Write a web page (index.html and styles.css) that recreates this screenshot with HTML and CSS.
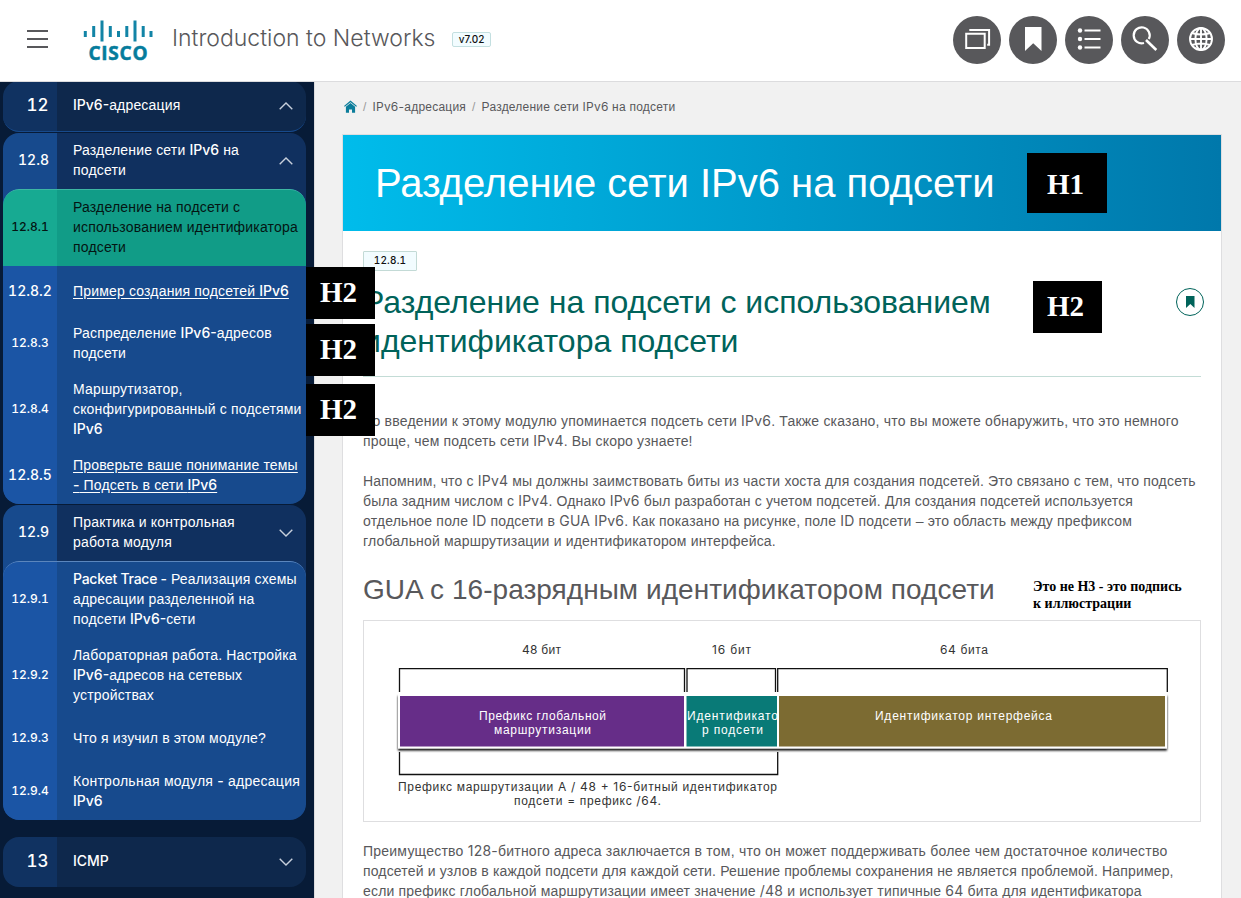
FILE: index.html
```html
<!DOCTYPE html>
<html lang="ru">
<head>
<meta charset="utf-8">
<title>Introduction to Networks</title>
<link rel="stylesheet" href="styles.css">
</head>
<body>
<header class="topbar">
  <svg class="burger" width="22" height="20" viewBox="0 0 22 20"><path d="M0 2h21M0 10h21M0 18h21" stroke="#58585b" stroke-width="2"/></svg>
  <svg class="logo" width="70" height="50" viewBox="0 0 70 50">
    <g stroke="#1284a6" stroke-width="3">
      <path d="M2.300 13v6M10.700 8v11M19 2.500v21M27.300 8v11M35.500 13v6M43.800 8v11M52 2.500v21M60.200 8v11M68 13v6"/>
    </g>
    <text x="5.500" y="41.500" textLength="59" lengthAdjust="spacing" class="logo-text">CISCO</text>
  </svg>
  <div class="course">Introduction to Networks</div>
  <span class="version">v7.02</span>
  <nav class="tools">
    <span class="tool"><svg viewBox="0 0 48 48"><path d="M13.200 17.800h18.500v14.300H13.200z" fill="none" stroke="#fff" stroke-width="2"/><path d="M16.300 14h19.800v14.700h-1.900" fill="none" stroke="#fff" stroke-width="2"/></svg></span>
    <span class="tool"><svg viewBox="0 0 48 48"><path d="M16 11h16.500v24L24.200 27.300 16 35z" fill="#fff"/></svg></span>
    <span class="tool"><svg viewBox="0 0 48 48"><path d="M19.500 14.500h16M19.500 23h16M19.500 31.500h16" stroke="#fff" stroke-width="2"/><g fill="#fff"><circle cx="15" cy="14.500" r="2.200"/><circle cx="15" cy="23" r="2.200"/><circle cx="15" cy="31.500" r="2.200"/></g></svg></span>
    <span class="tool"><svg viewBox="0 0 48 48"><path d="M23 27A8 8 0 1 1 27.800 23" fill="none" stroke="#fff" stroke-width="2.200"/><path d="M25 24l10.300 10" stroke="#fff" stroke-width="2.600"/></svg></span>
    <span class="tool"><svg viewBox="0 0 48 48"><g fill="none" stroke="#fff" stroke-width="1.900"><circle cx="24" cy="23" r="11"/><ellipse cx="24" cy="23" rx="5.600" ry="11"/><path d="M24 12v22M13 23h22M15 17q9 3 18 0M15 29q9-3 18 0"/></g></svg></span>
  </nav>
</header>
<div class="page">
  <aside class="side">
    <div class="row module first"><b class="n big">12</b><span class="t"><i>IPv6-</i>адресация</span><svg class="chev" viewBox="0 0 14 8"><path d="M.7 7.300 7 1l6.300 6.300"/></svg></div>
    <div class="group">
      <div class="row topic"><b class="n mid">12.8</b><span class="t">Разделение сети <i>IPv6</i> на<br>подсети</span><svg class="chev" viewBox="0 0 14 8"><path d="M.7 7.300 7 1l6.300 6.300"/></svg></div>
      <div class="list">
        <div class="row three active"><b class="n">12.8.1</b><span class="t">Разделение на подсети с<br>использованием идентификатора<br>подсети</span></div>
        <div class="row one short"><b class="n wide">12.8.2</b><span class="t u">Пример создания подсетей <i>IPv6</i></span></div>
        <div class="row two"><b class="n">12.8.3</b><span class="t">Распределение <i>IPv6-</i>адресов<br>подсети</span></div>
        <div class="row three"><b class="n">12.8.4</b><span class="t">Маршрутизатор,<br>сконфигурированный с подсетями<br><i>IPv6</i></span></div>
        <div class="row last"><b class="n wide">12.8.5</b><span class="t u">Проверьте ваше понимание темы<br><i>-</i> Подсеть в сети <i>IPv6</i></span></div>
      </div>
    </div>
    <div class="group">
      <div class="row topic"><b class="n mid">12.9</b><span class="t">Практика и контрольная<br>работа модуля</span><svg class="chev" viewBox="0 0 14 8"><path d="M.7.700 7 7 13.300.700"/></svg></div>
      <div class="list">
        <div class="row three lined"><b class="n">12.9.1</b><span class="t"><i class="tight">Packet Trace -</i> Реализация схемы<br>адресации разделенной на<br>подсети <i>IPv6-</i>сети</span></div>
        <div class="row three"><b class="n">12.9.2</b><span class="t">Лабораторная работа. Настройка<br><i>IPv6-</i>адресов на сетевых<br>устройствах</span></div>
        <div class="row one"><b class="n">12.9.3</b><span class="t">Что я изучил в этом модуле?</span></div>
        <div class="row last"><b class="n">12.9.4</b><span class="t loose">Контрольная модуля <i>-</i> адресация<br><i>IPv6</i></span></div>
      </div>
    </div>
    <div class="row module next"><b class="n big">13</b><span class="t"><i>ICMP</i></span><svg class="chev" viewBox="0 0 14 8"><path d="M.7.700 7 7 13.300.700"/></svg></div>
  </aside>
  <main class="main">
    <div class="crumbs">
      <svg width="13" height="13" viewBox="0 0 13 13"><path d="M0 6 6.500.600 13 6l-.8.800L6.500 2.200.8 6.800z" fill="#0b7d9b"/><path d="M1.900 6.700 6.500 3l4.600 3.700v6H8V9.500H5v3.200H1.900z" fill="#0b7d9b"/></svg>
      <em>/</em><span><i>IPv6-</i>адресация</span><em>/</em><span>Разделение сети <i>IPv6</i> на подсети</span>
    </div>
    <article class="card">
      <h1 class="banner">Разделение сети IPv6 на подсети</h1>
      <div class="body">
        <span class="tag">12.8.1</span>
        <div class="heading">
          <h2 class="title">Разделение на подсети с использованием<br>идентификатора подсети</h2>
          <span class="mark"><svg width="9" height="12" viewBox="0 0 9 12"><path d="M0 0h8.500v12l-4.200-3.900L0 12z" fill="#00635a"/></svg></span>
        </div>
        <p class="p1"><span class="ls-d">Во введении к этому модулю упоминается подсеть сети <i>IPv6</i>. Также сказано, что вы можете обнаружить, что это немного</span><br><span class="ls-b">проще, чем подсеть сети <i>IPv4</i>. Вы скоро узнаете!</span></p>
        <p><span class="ls-c">Напомним, что с <i>IPv4</i> мы должны заимствовать биты из части хоста для создания подсетей. Это связано с тем, что подсеть</span><br><span class="ls-a">была задним числом с <i>IPv4</i>. Однако <i>IPv6</i> был разработан с учетом подсетей. Для создания подсетей используется</span><br><span class="ls-c">отдельное поле <i>ID</i> подсети в <i>GUA IPv6</i>. Как показано на рисунке, поле <i>ID</i> подсети – это область между префиксом</span><br><span class="ls-c">глобальной маршрутизации и идентификатором интерфейса.</span></p>
        <div class="caption">GUA с 16-разрядным идентификатором подсети</div>
        <div class="figure">
          <svg width="836" height="200" viewBox="364 621 836 200">
            <defs><filter id="sh" x="-5%" y="-20%" width="110%" height="150%"><feDropShadow dx="0" dy="2" stdDeviation="1.200" flood-color="#000" flood-opacity="1"/></filter></defs>
            <g fill="none" stroke="#111" stroke-width="1.300">
              <path d="M399.500 692v-23.300h285V692M687 692v-23.300h88.500V692M777.700 692v-23.300h389.600V692"/>
              <path d="M399.500 752v22.500h378.200V752"/>
            </g>
            <rect x="398" y="694" width="769" height="54.500" fill="#fff" filter="url(#sh)"/>
            <rect x="400" y="696" width="284" height="50.500" fill="#662d88"/>
            <rect x="686.500" y="696" width="90.500" height="50.500" fill="#097a77"/>
            <rect x="779" y="696" width="386" height="50.500" fill="#7c6b32"/>
            <g class="dk">
              <text x="522" y="654" textLength="39"><tspan class="lt">48</tspan> бит</text>
              <text x="712" y="654" textLength="39"><tspan class="lt">16</tspan> бит</text>
              <text x="940" y="654" textLength="48"><tspan class="lt">64</tspan> бита</text>
              <text x="398" y="791" textLength="379">Префикс маршрутизации <tspan class="lt">A / 48 + 16-</tspan>битный идентификатор</text>
              <text x="514" y="805" textLength="147">подсети <tspan class="lt">=</tspan> префикс <tspan class="lt">/64.</tspan></text>
            </g>
            <g class="wt">
              <text x="479" y="720" textLength="127">Префикс глобальной</text>
              <text x="494" y="734" textLength="97">маршрутизации</text>
              <text x="687" y="720" textLength="91">Идентификато</text>
              <text x="702" y="734" textLength="61">р подсети</text>
              <text x="875" y="720" textLength="177">Идентификатор интерфейса</text>
            </g>
          </svg>
        </div>
        <p><span class="ls-e">Преимущество <i>128-</i>битного адреса заключается в том, что он может поддерживать более чем достаточное количество</span><br><span class="ls-a">подсетей и узлов в каждой подсети для каждой сети. Решение проблемы сохранения не является проблемой. Например,</span><br><span class="ls-c">если префикс глобальной маршрутизации имеет значение <i>/48</i> и использует типичные <i>64</i> бита для идентификатора</span></p>
      </div>
    </article>
  </main>
</div>
<div class="note h1n">H1</div>
<div class="note h2n">H2</div>
<div class="note s1">H2</div>
<div class="note s2">H2</div>
<div class="note s3">H2</div>
<div class="remark">Это не H3 - это подпись<br>к иллюстрации</div>
</body>
</html>
```
FILE: styles.css
```css
* { box-sizing: border-box; }
body { margin: 0; width: 1241px; height: 898px; overflow: hidden; position: relative; background: #f1f1f1; font-family: "Liberation Sans", Arial, sans-serif; color: #58585b; }
i { font-style: normal; font-family: Inter, sans-serif; }
.topbar { height: 82px; background: #fff; border-bottom: 1px solid #dcdcde; display: flex; align-items: flex-start; padding-left: 27px; }
.burger { margin-top: 29px; }
.logo { margin: 18px 0 0 34px; overflow: visible; }
.logo-text { font: 700 19px "Open Sans", sans-serif; fill: #057c9c; stroke: #057c9c; stroke-width: .5px; }
.course { width: 263px; margin: 20px 0 0 19px; font: 300 23px/37px Inter, sans-serif; white-space: nowrap; }
.version { margin: 32px 0 0 17px; width: 39px; height: 15px; border: 1px solid #c3dfe0; border-radius: 2px; background: #f2fcff; color: #111; font: 500 10px/13px Inter, sans-serif; text-align: center; }
.tools { display: flex; gap: 8px; margin: 16px 16px 0 auto; }
.tool { width: 48px; height: 48px; border-radius: 50%; background: #58585b; }
.tool svg { display: block; }
.page { display: flex; height: 816px; }

.side { width: 314px; height: 816px; background: #071b37; padding: 0 8px 0 3px; overflow: hidden; }
.row { display: flex; align-items: center; color: #fff; font-size: 14px; line-height: 20px; }
.n { width: 54px; flex: none; text-align: center; font: 500 12px/20px Inter, sans-serif; font-variant-numeric: tabular-nums; }
.n.big { font-size: 17px; padding-left: 15px; }
.n.mid { font-size: 14px; padding-left: 7px; }
.n.wide { font-size: 14px; }
.t { flex: 1; padding-left: 16px; white-space: nowrap; letter-spacing: .17px; }
.t.loose { letter-spacing: .26px; }
.side i { font-weight: 500; letter-spacing: 0; }
.side i.tight { letter-spacing: -.25px; }
.u { text-decoration: underline; text-underline-offset: 2px; }
.chev { width: 14px; height: 8px; margin: 2px 13px 0 0; fill: none; stroke: #c8d0dc; stroke-width: 1.400; overflow: visible; }
.module { height: 50px; border-radius: 16px; background: linear-gradient(90deg, #103261 54px, #0e284c 54px); }
.module.first { margin-top: -1px; padding-bottom: 2px; border-bottom: 1px solid #174a8d; height: 51px; }
.module.next { margin-top: 17px; padding-bottom: 2px; }
.group { margin-top: 1px; border-radius: 16px; overflow: hidden; background: linear-gradient(90deg, #174a8d 54px, #10305f 54px); }
.topic { height: 56px; padding-bottom: 2px; }
.list { border-radius: 16px; overflow: hidden; background: linear-gradient(90deg, #1b55a5 54px, #174a8d 54px); }
.three { height: 76px; }
.two { height: 56px; }
.one { height: 50px; }
.one.short { height: 49px; }
.last { height: 57px; padding-bottom: 2px; }
.active { height: 77px; color: #041513; border-top: 1px solid #3db7a3; border-radius: 16px 16px 0 0; background: linear-gradient(90deg, #17aa92 54px, #119c87 54px); padding-bottom: 2px; }
.lined { border-top: 1px solid #5b86bd; border-radius: 16px 16px 0 0; padding-bottom: 2px; }

.main { width: 927px; padding: 0 20px 0 28px; border-left: 1px solid #dcdcde; }
.crumbs { height: 52px; display: flex; align-items: center; padding: 0 0 3px 1px; font-size: 12px; white-space: nowrap; letter-spacing: .22px; }
.crumbs em { font-style: normal; color: #999; margin: 0 6px; }
.card { height: 780px; margin-left: -1px; border: 1px solid #dedee0; background: #fff; width: 880px; }
.banner { margin: 0; height: 96px; padding-left: 32px; background: linear-gradient(90deg, #00bceb, #0078ab); color: #fff; font-weight: 400; font-size: 40px; line-height: 97px; white-space: nowrap; }
.body { padding: 20px 20px 0; }
.tag { display: block; width: 54px; height: 20px; border: 1px solid #c3dad6; background: #f2fcff; border-radius: 1px; color: #111; font: 500 10px/17px Inter, sans-serif; font-variant-numeric: tabular-nums; letter-spacing: .2px; text-align: center; }
.heading { display: flex; justify-content: space-between; height: 106px; border-bottom: 1px solid #c3dcd6; padding-top: 12px; }
.title { margin: 0; font-weight: 400; font-size: 32px; line-height: 39px; color: #00635a; white-space: nowrap; }
.mark { width: 28px; height: 28px; margin: 5px -3px 0 0; border: 1px solid #00635a; border-radius: 50%; display: grid; place-items: center; }
p { margin: 0 0 20px; font-size: 14px; line-height: 20px; white-space: nowrap; }
.p1 { margin-top: 34px; }
.ls-a { letter-spacing: .153px; }
.ls-b { letter-spacing: .17px; }
.ls-c { letter-spacing: .18px; }
.ls-d { letter-spacing: .203px; }
.ls-e { letter-spacing: .228px; }
.caption { font-size: 28px; line-height: 38px; height: 49px; letter-spacing: .04px; white-space: nowrap; }
.figure { width: 838px; height: 202px; border: 1px solid #dedee0; margin-bottom: 19px; }
.figure svg { display: block; }
.dk { font-size: 12px; fill: #333; }
.wt { font-size: 12px; fill: #fff; }
.lt { font-family: Inter, sans-serif; }
.note { position: absolute; width: 69px; height: 52px; background: #000; color: #fff; font: 700 29px/50px "Liberation Serif", serif; padding-left: 14px; }
.h1n { left: 1027px; top: 153px; width: 80px; height: 60px; line-height: 62px; padding-left: 20px; }
.h2n { left: 1033px; top: 281px; }
.s1 { left: 306px; top: 267px; }
.s2 { left: 306px; top: 324px; }
.s3 { left: 306px; top: 384px; }
.remark { position: absolute; left: 1033px; top: 578px; font: 700 14px/17px "Liberation Serif", serif; color: #000; white-space: nowrap; }
```
